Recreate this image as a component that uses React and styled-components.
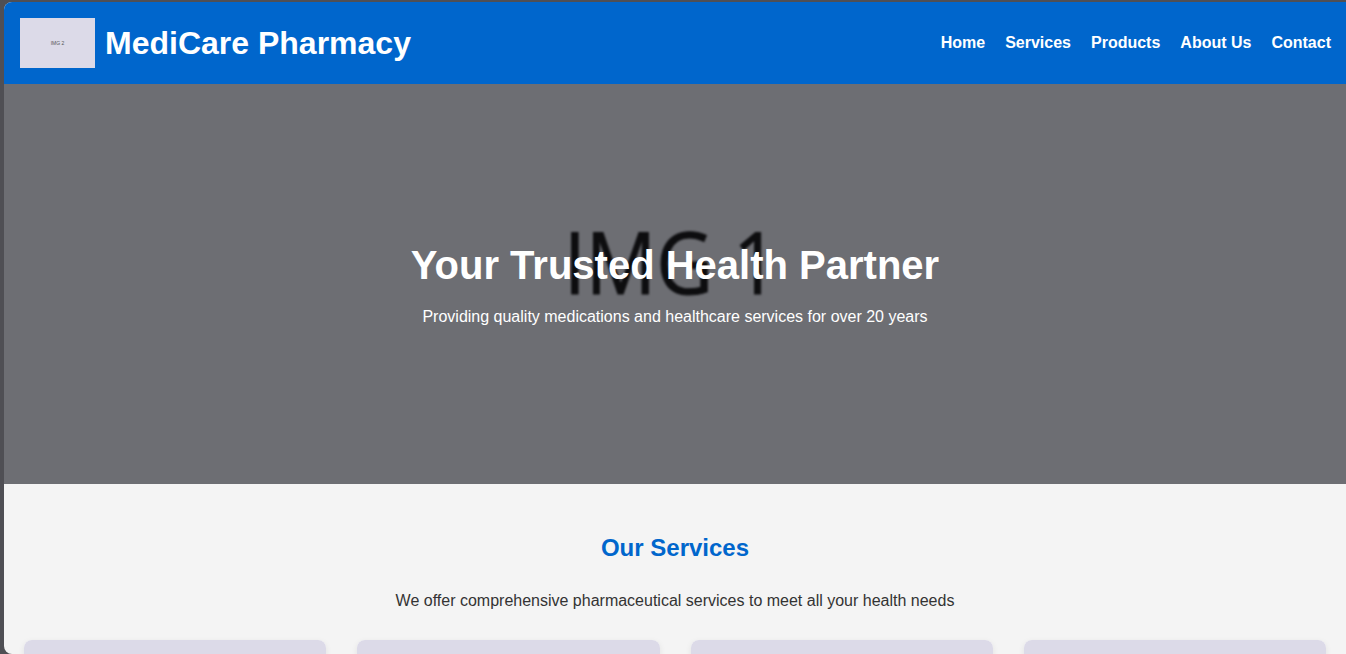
import React from "react";
import styled, { createGlobalStyle } from "styled-components";

const Global = createGlobalStyle`
  html, body { margin: 0; padding: 0; height: 100%; }
  body {
    background: #4f4f54;
    font-family: "Liberation Sans", Arial, sans-serif;
    overflow: hidden;
  }
  * { box-sizing: border-box; }
`;

const Frame = styled.div`
  margin: 2px 0 0 4px;
  height: calc(100vh - 2px);
  border-radius: 8px 0 0 8px;
  overflow: hidden;
  background: #f4f4f4;
  display: flex;
  flex-direction: column;
`;

const Header = styled.header`
  background: #0066cc;
  padding: 16px 15px 16px 16px;
  display: flex;
  align-items: center;
  justify-content: space-between;
  flex-shrink: 0;
`;

const Brand = styled.div`
  display: flex;
  align-items: center;
  gap: 10px;
`;

const Placeholder = styled.div`
  background: #dcdae8;
  color: #555;
  display: flex;
  align-items: center;
  justify-content: center;
  width: ${(p) => p.$w || "100%"};
  height: ${(p) => p.$h};
  font-size: ${(p) => p.$fs || "5px"};
`;

const Title = styled.h1`
  margin: 0;
  color: #fff;
  font-size: 32px;
  font-weight: 700;
`;

const Nav = styled.nav`
  display: flex;
  gap: 20px;
`;

const NavLink = styled.a`
  color: #fff;
  font-weight: 700;
  font-size: 16px;
  text-decoration: none;
`;

const Hero = styled.section`
  height: 400px;
  flex-shrink: 0;
  background: #6d6e73;
  display: grid;
  overflow: hidden;
`;

const HeroArt = styled.svg`
  grid-area: 1 / 1;
  width: 100%;
  height: 100%;
  filter: blur(0.8px);
`;

const HeroContent = styled.div`
  grid-area: 1 / 1;
  display: flex;
  flex-direction: column;
  align-items: center;
  justify-content: center;
  color: #fff;
  text-align: center;
  position: relative;
`;

const HeroTitle = styled.h2`
  margin: 0 0 20px;
  font-size: 40px;
  font-weight: 700;
`;

const HeroText = styled.p`
  margin: 0;
  font-size: 16px;
`;

const Services = styled.section`
  padding: 50px 20px;
  text-align: center;
`;

const SectionTitle = styled.h2`
  margin: 0 0 30px;
  color: #0066cc;
  font-size: 24px;
  font-weight: 700;
`;

const SectionText = styled.p`
  margin: 0 0 30px;
  color: #333;
  font-size: 16px;
`;

const Grid = styled.div`
  display: grid;
  grid-template-columns: repeat(4, 1fr);
  gap: 31px;
`;

const Card = styled.div`
  background: #fff;
  border-radius: 8px;
  overflow: hidden;
  box-shadow: 0 2px 6px rgba(0, 0, 0, 0.08);
  height: 320px;
`;

export default function App() {
  return (
    <>
      <Global />
      <Frame>
        <Header>
          <Brand>
            <Placeholder $w="75px" $h="50px">IMG 2</Placeholder>
            <Title>MediCare Pharmacy</Title>
          </Brand>
          <Nav>
            {["Home", "Services", "Products", "About Us", "Contact"].map((n) => (
              <NavLink key={n} href="#">{n}</NavLink>
            ))}
          </Nav>
        </Header>
        <Hero>
          <HeroArt aria-hidden="true">
            <text
              x="50%"
              dx="-4"
              y="210"
              textAnchor="middle"
              fontFamily="'Open Sans', 'DejaVu Sans', sans-serif"
              fontSize="86"
              fill="#0d0d0f"
              stroke="#0d0d0f"
              strokeWidth="1"
              textLength="214"
              lengthAdjust="spacingAndGlyphs"
            >
              IMG 1
            </text>
          </HeroArt>
          <HeroContent>
            <HeroTitle>Your Trusted Health Partner</HeroTitle>
            <HeroText>Providing quality medications and healthcare services for over 20 years</HeroText>
          </HeroContent>
        </Hero>
        <Services>
          <SectionTitle>Our Services</SectionTitle>
          <SectionText>We offer comprehensive pharmaceutical services to meet all your health needs</SectionText>
          <Grid>
            {[1, 2, 3, 4].map((i) => (
              <Card key={i}>
                <Placeholder $h="200px" $fs="12px" />
              </Card>
            ))}
          </Grid>
        </Services>
      </Frame>
    </>
  );
}
